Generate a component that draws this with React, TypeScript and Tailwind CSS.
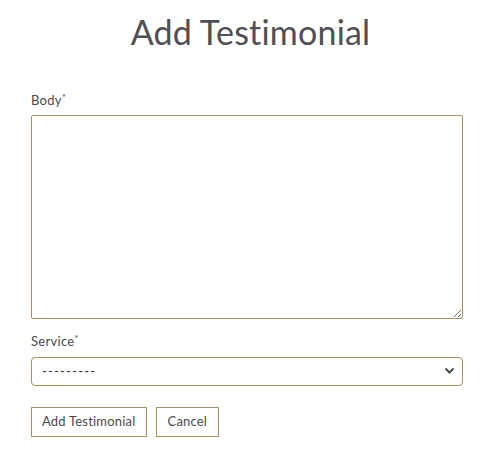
export default function App() {
  return (
    <div className="w-[501px] h-[464px] bg-white font-['Lato','Open_Sans',sans-serif] text-[#4a4a50]">
      <h1 className="pt-[9px] text-center text-[34px] leading-[46px] tracking-[0.2px] text-[#4f4f55]">Add Testimonial</h1>
      <form className="mt-[34px] px-[31px] w-[494px]">
        <label className="block text-[13px] leading-[18px] tracking-[0.3px]">
          Body<span className="text-[9px] align-[4px]">*</span>
        </label>
        <textarea className="block mt-[6px] w-full h-[204px] border border-[#a8915f] rounded-[2px] bg-white" />
        <label className="block mt-[11px] text-[13px] leading-[18px] tracking-[0.3px]">
          Service<span className="text-[9px] align-[4px]">*</span>
        </label>
        <div className="relative mt-[7px]">
          <select className="block w-full h-[29px] appearance-none border border-[#a8915f] rounded-[4px] bg-white pl-[10px] text-[13px] tracking-[1.2px] text-[#2f2f35]">
            <option>---------</option>
          </select>
          <svg
            className="absolute right-[8px] top-[10px] pointer-events-none"
            width="11"
            height="8"
            viewBox="0 0 11 8"
          >
            <path d="M1.5 1.5 L5.5 5.5 L9.5 1.5" fill="none" stroke="#4a4a50" strokeWidth="2" />
          </svg>
        </div>
        <div className="flex gap-[9px] mt-[21px]">
          <button type="button" className="h-[30px] px-[10px] border border-[#a8915f] text-[13px] tracking-[0.2px] bg-white">
            Add Testimonial
          </button>
          <button type="button" className="h-[30px] px-[11px] border border-[#a8915f] text-[13px] tracking-[0.2px] bg-white">
            Cancel
          </button>
        </div>
      </form>
    </div>
  );
}
